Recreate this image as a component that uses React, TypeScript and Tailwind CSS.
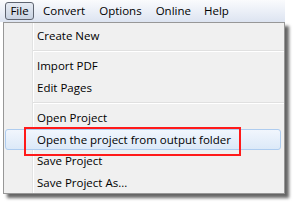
export default function App() {
  const font = { fontFamily: '"Open Sans", "Noto Sans", sans-serif' };
  return (
    <div className="w-[297px] h-[218px] bg-white relative overflow-hidden text-[11.5px] text-black" style={font}>
      <div className="w-[285px] h-[22px] bg-gradient-to-b from-[#fafbfd] to-[#dde4f1] flex items-center pl-[5px]">
        <div className="h-[18px] w-[29px] flex items-center justify-center rounded-[3px] border border-[#5e6470] bg-gradient-to-b from-[#e6ebf3] to-[#c9d3e2]">File</div>
        <span className="ml-[9px]">Convert</span>
        <span className="ml-[14px]">Options</span>
        <span className="ml-[14px]">Online</span>
        <span className="ml-[13px]">Help</span>
      </div>
      <div className="absolute left-[3px] top-[22px] w-[282px] h-[172px] bg-[#f0f0f0] border border-[#979797] shadow-[4px_4px_3px_rgba(0,0,0,0.6)] flex">
        <div className="w-[29px] border-r border-r-[#e2e3e3] shadow-[1px_0_0_#ffffff]" />
        <div className="flex-1 flex flex-col pt-[2px]">
          <div className="h-[22px] flex items-center pl-[4px]">Create New</div>
          <div className="h-[9px] flex items-center"><div className="w-full h-[1px] bg-[#e0e0e0] shadow-[0_1px_0_#ffffff]" /></div>
          <div className="h-[22px] flex items-center pl-[4px]">Import PDF</div>
          <div className="h-[22px] flex items-center pl-[4px]">Edit Pages</div>
          <div className="h-[9px] flex items-center"><div className="w-full h-[1px] bg-[#e0e0e0] shadow-[0_1px_0_#ffffff]" /></div>
          <div className="h-[23px] flex items-center pl-[4px]">Open Project</div>
          <div className="h-[22px] flex items-center ml-[-28px] mr-[3px] pl-[31px] rounded-[3px] border border-[#aeccef] bg-gradient-to-b from-[#f1f6fd] to-[#dce9f8]">Open the project from output folder</div>
          <div className="h-[22px] flex items-center pl-[4px]">Save Project</div>
          <div className="h-[22px] flex items-center pl-[4px]">Save Project As...</div>
        </div>
      </div>
      <div className="absolute left-[24px] top-[127px] w-[217px] h-[29px] border-2 border-[#ff1a1a]" />
    </div>
  );
}
